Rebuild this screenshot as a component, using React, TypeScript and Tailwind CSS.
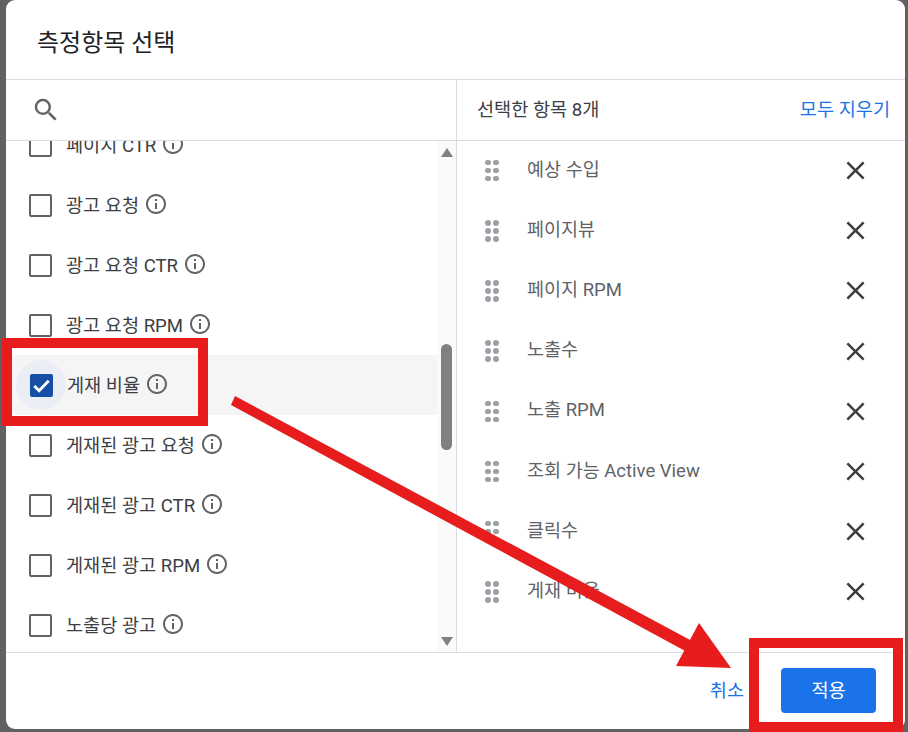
const leftItems = [
  { label: "페이지 CTR" },
  { label: "광고 요청" },
  { label: "광고 요청 CTR" },
  { label: "광고 요청 RPM" },
  { label: "게재 비율", checked: true },
  { label: "게재된 광고 요청" },
  { label: "게재된 광고 CTR" },
  { label: "게재된 광고 RPM" },
  { label: "노출당 광고" },
];

const selected = ["예상 수입", "페이지뷰", "페이지 RPM", "노출수", "노출 RPM", "조회 가능 Active View", "클릭수", "게재 비율"];

function InfoIcon() {
  return (
    <svg width="24" height="24" viewBox="0 0 24 24" className="shrink-0 fill-[#5f6368] -mt-[3px]">
      <path d="M11 7h2v2h-2zm0 4h2v6h-2zm1-9C6.48 2 2 6.48 2 12s4.48 10 10 10 10-4.48 10-10S17.52 2 12 2zm0 18c-4.41 0-8-3.59-8-8s3.59-8 8-8 8 3.59 8 8-3.59 8-8 8z" />
    </svg>
  );
}

function Checkbox({ checked }: { checked?: boolean }) {
  if (checked) {
    return (
      <div className="relative w-[24px] h-[24px] flex items-center justify-center">
        <div className="absolute w-[50px] h-[50px] rounded-full bg-[#ebeff5]" />
        <div className="relative w-[23px] h-[23px] rounded-[2px] bg-[#174ea6] flex items-center justify-center">
          <svg width="23" height="23" viewBox="0 0 24 24" className="fill-none stroke-white stroke-[3]">
            <path d="M4.5 12.5 9.5 17.5 19.5 7" />
          </svg>
        </div>
      </div>
    );
  }
  return <div className="w-[23px] h-[23px] rounded-[2px] border-[2.5px] border-[#5f6368]" />;
}

function DragDots() {
  return (
    <div className="grid grid-cols-2 gap-x-[3px] gap-y-[2.5px] w-[13px]">
      {[0, 1, 2, 3, 4, 5].map((i) => (
        <div key={i} className="w-[5.5px] h-[5.5px] rounded-full bg-[#9aa0a6]" />
      ))}
    </div>
  );
}

export default function App() {
  return (
    <div className="relative w-[908px] h-[732px] overflow-hidden bg-[#606163] font-['Roboto','Noto_Sans_CJK_KR',sans-serif]">
      <div className="ml-[6px] w-[899px] h-[729px] rounded-[9px] bg-white flex flex-col overflow-hidden">
        <div className="h-[80px] shrink-0 border-b border-[#dadce0] pl-[31px] pt-[26px] text-[24px] leading-[34px] text-[#202124]">
          측정항목 선택
        </div>

        <div className="flex flex-1 min-h-0">
          <div className="w-[451px] shrink-0 border-r border-[#dadce0] flex flex-col">
            <div className="h-[61px] shrink-0 border-b border-[#dadce0] pl-[25px] flex items-center">
              <svg width="30" height="30" viewBox="0 0 24 24" className="fill-[#5f6368]">
                <path d="M15.5 14h-.79l-.28-.27A6.47 6.47 0 0 0 16 9.5 6.5 6.5 0 1 0 9.5 16c1.61 0 3.09-.59 4.23-1.57l.27.28v.79l5 4.99L20.49 19l-4.99-5zm-6 0C7.01 14 5 11.99 5 9.5S7.01 5 9.5 5 14 7.01 14 9.5 11.99 14 9.5 14z" />
              </svg>
            </div>
            <div className="flex flex-1 min-h-0">
              <div className="flex-1 min-w-0 overflow-hidden">
                <div className="-mt-[26px]">
                  {leftItems.map((item) => (
                    <div
                      key={item.label}
                      className={`h-[60px] flex items-center pl-[23px] ${item.checked ? "bg-[#f5f5f5]" : ""}`}
                    >
                      <Checkbox checked={item.checked} />
                      <span className="ml-[14px] mr-[5px] mt-[2px] text-[18.6px] leading-[24px] text-[#3c4043]">{item.label}</span>
                      <InfoIcon />
                    </div>
                  ))}
                </div>
              </div>
              <div className="w-[19px] shrink-0 bg-[#fafafa] flex flex-col items-center relative">
                <div className="mt-[7px] w-0 h-0 border-x-[6.5px] border-x-transparent border-b-[9px] border-b-[#808080]" />
                <div className="mt-[187px] w-[11px] h-[106px] rounded-full bg-[#808080]" />
                <div className="mt-auto mb-[6px] w-0 h-0 border-x-[6.5px] border-x-transparent border-t-[9px] border-t-[#808080]" />
              </div>
            </div>
          </div>

          <div className="flex-1 flex flex-col min-w-0">
            <div className="h-[61px] shrink-0 border-b border-[#dadce0] pl-[20px] pr-[15px] pt-[2px] flex items-center justify-between text-[18.6px]">
              <span className="text-[#3c4043]">선택한 항목 8개</span>
              <span className="text-[#1a73e8]">모두 지우기</span>
            </div>
            <div className="-mt-[0.5px]">
              {selected.map((name) => (
                <div key={name} className="h-[60.2px] flex items-center pl-[28px] pr-[34px]">
                  <DragDots />
                  <span className="ml-[29px] flex-1 text-[18.5px] text-[#5f6368]">{name}</span>
                  <svg width="31" height="31" viewBox="0 0 24 24" className="fill-[#3c4043]">
                    <path d="M19 6.41 17.59 5 12 10.59 6.41 5 5 6.41 10.59 12 5 17.59 6.41 19 12 13.41 17.59 19 19 17.59 13.41 12z" />
                  </svg>
                </div>
              ))}
            </div>
          </div>
        </div>

        <div className="h-[77px] shrink-0 border-t border-[#dadce0] flex items-center justify-end pr-[29px] pb-[2px]">
          <span className="text-[18.6px] text-[#1a73e8] mr-[37px] mt-[4px]">취소</span>
          <div className="w-[95px] h-[45px] pt-[3px] rounded-[4px] bg-[#1a73e8] text-white text-[18.6px] flex items-center justify-center">
            적용
          </div>
        </div>
      </div>

      {/* red annotations on top of the dialog */}
      <div className="absolute left-[2px] top-[338px] w-[206px] h-[88px] border-[10px] border-[#e71d1d]" />
      <div className="absolute left-[749px] top-[638px] w-[154px] h-[94px] border-[10px] border-[#e71d1d]" />
      <svg className="absolute left-0 top-0 pointer-events-none" width="908" height="732" viewBox="0 0 908 732">
        <polygon points="235,396 720,656 700,659 231,405" fill="#e71d1d" />
        <polygon points="699,623 731,668 676,666" fill="#e71d1d" />
      </svg>
    </div>
  );
}
